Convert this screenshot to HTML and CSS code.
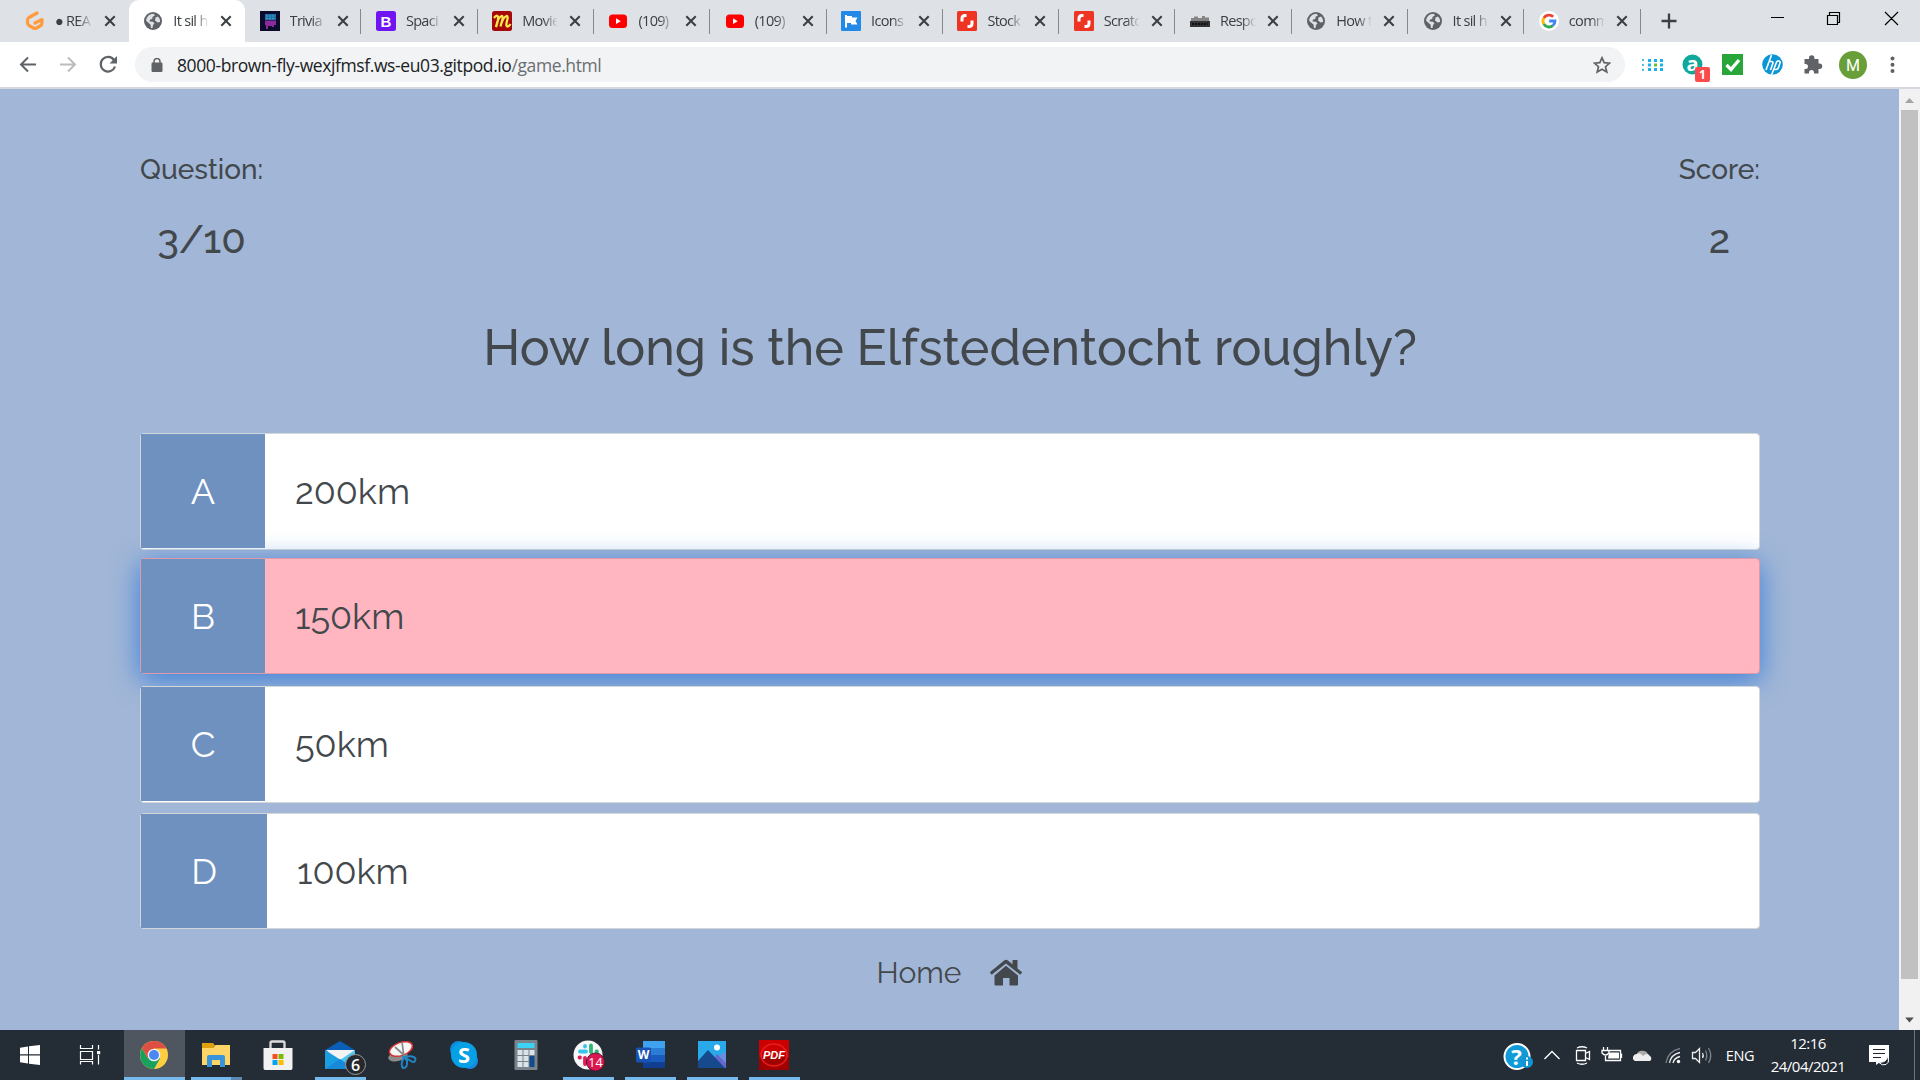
FILE: index.html
```html
<!DOCTYPE html>
<html lang="en">
<head>
<meta charset="utf-8">
<title>It sil heve</title>
<link rel="stylesheet" href="styles.css">
</head>
<body>
<svg class="defs" width="0" height="0">
  <symbol id="globe" viewBox="0 0 20 20"><circle cx="10" cy="10" r="9" fill="#5f6368"/><path d="M3 9.5C4 5 6.500 3 10.500 2.800L12 4.200 9.500 6 9.300 8 7 8.500 6.500 10.500 10 10.800 11.500 12.500 10 14 9.500 17 8 17 7.500 13.500 5 11.500zM12.500 6.500L15 5.500C16.800 7.500 17.300 9 17 11L14.500 11.500 12 9.500z" fill="#dee1e6"/></symbol>
  <symbol id="close" viewBox="0 0 12 12"><path d="M1.300 1.300L10.700 10.700M10.700 1.300L1.300 10.700" stroke="#3c4043" stroke-width="2.100"/></symbol>
  <symbol id="youtube" viewBox="0 0 20 20"><rect x="1" y="3.500" width="18" height="13.500" rx="3.500" fill="#f00"/><path d="M8 7.300L12.800 10.200 8 13z" fill="#fff"/></symbol>
  <symbol id="shutter" viewBox="0 0 20 20"><rect width="20" height="20" rx="1.500" fill="#ee3524"/><path d="M9.500 4.500H8C5.500 4.500 5 6 5 7.500V10.500M10.500 15.500H12C14.500 15.500 15 14 15 12.500V9.500" fill="none" stroke="#fff" stroke-width="3"/></symbol>
</svg>

<header class="tabstrip">
  <div class="tab first"><svg class="fav"><path d="M12 2L4 6.500Q2.500 7.500 2.500 9V12Q2.500 13.500 4 14.500L8.500 17Q10 17.800 11.500 17L15 15Q17 14 17 12V8.500L10 12" fill="none" stroke="#ff9b3d" stroke-width="3.200" stroke-linejoin="round" stroke-linecap="round"/></svg><span class="label">● REA</span><svg class="x"><use href="#close"/></svg></div>
  <div class="tab active"><svg class="fav"><use href="#globe"/></svg><span class="label">It sil h</span><svg class="x"><use href="#close"/></svg></div>
  <div class="tab"><svg class="fav"><rect width="20" height="20" fill="#0b0c2c"/><path d="M5 3H16V9H5z" fill="#236fa5"/><path d="M5 9.500H16V14H14V16H12V15H8V18H6V14H5z" fill="#8a2a9d"/><path d="M6 5H15M6 7.500H15" stroke="#2ea5d4" stroke-dasharray="2 1"/></svg><span class="label">Trivia</span><svg class="x"><use href="#close"/></svg></div>
  <div class="tab"><svg class="fav"><rect width="20" height="20" rx="2.500" fill="#7014f3"/><text x="10" y="15.500" class="b-letter">B</text></svg><span class="label">Spaci</span><svg class="x"><use href="#close"/></svg></div>
  <div class="tab"><svg class="fav"><rect width="20" height="20" rx="2.500" fill="#a50808"/><path d="M2 7Q5 3 6 6Q6.500 9 4 16Q6 6 9.500 5Q11.500 5 10 10L8.500 15.500Q11 6 14.500 5Q16.500 5 15 10Q13.500 15.500 15.500 15.500Q17 15.500 18.500 13" fill="none" stroke="#ffe94a" stroke-width="2.300"/></svg><span class="label">Movie</span><svg class="x"><use href="#close"/></svg></div>
  <div class="tab"><svg class="fav"><use href="#youtube"/></svg><span class="label">(109)</span><svg class="x"><use href="#close"/></svg></div>
  <div class="tab"><svg class="fav"><use href="#youtube"/></svg><span class="label">(109)</span><svg class="x"><use href="#close"/></svg></div>
  <div class="tab"><svg class="fav"><rect width="20" height="20" rx="1" fill="#228ae6"/><path d="M4 4H6V5H11V6.500H16.500L14.500 10 16.500 13.500H10V12H6V16.500H4z" fill="#fff"/></svg><span class="label">Icons</span><svg class="x"><use href="#close"/></svg></div>
  <div class="tab"><svg class="fav"><use href="#shutter"/></svg><span class="label">Stock</span><svg class="x"><use href="#close"/></svg></div>
  <div class="tab"><svg class="fav"><use href="#shutter"/></svg><span class="label">Scratc</span><svg class="x"><use href="#close"/></svg></div>
  <div class="tab"><svg class="fav"><path d="M1 7H4V5.500H8V7H12V5H15V6.500H19V10H1z" fill="#858585"/><rect y="10" width="20" height="6" fill="#333"/><path d="M2 13H18" stroke="#111" stroke-width="2" stroke-dasharray="2 1"/></svg><span class="label">Respo</span><svg class="x"><use href="#close"/></svg></div>
  <div class="tab"><svg class="fav"><use href="#globe"/></svg><span class="label">How t</span><svg class="x"><use href="#close"/></svg></div>
  <div class="tab"><svg class="fav"><use href="#globe"/></svg><span class="label">It sil h</span><svg class="x"><use href="#close"/></svg></div>
  <div class="tab"><svg class="fav"><circle cx="10" cy="10" r="10" fill="#fff"/><g fill="none" stroke-width="2.800"><path d="M14.200 5.800A6 6 0 0 0 4.800 7" stroke="#ea4335"/><path d="M4.800 7A6 6 0 0 0 4.800 13" stroke="#fbbc05"/><path d="M4.800 13A6 6 0 0 0 13.800 14.600" stroke="#34a853"/><path d="M13.800 14.600A6 6 0 0 0 16 10H10.200" stroke="#4285f4"/></g></svg><span class="label">comm</span><svg class="x"><use href="#close"/></svg></div>
  <svg class="newtab" viewBox="0 0 16 16"><path d="M8 .5V15.500M.5 8H15.500" stroke="#3c4043" stroke-width="2.300"/></svg>
  <svg class="winctl" viewBox="1760 0 160 42"><g fill="none" stroke="#000" stroke-width="1.200"><path d="M1771 17.500H1784M1827.500 15.500H1837.500V24.500H1827.500zM1829.500 15V12.500H1839.500V22.500H1838M1885 12L1898 25M1898 12L1885 25"/></g></svg>
</header>

<nav class="toolbar">
  <svg class="navs" viewBox="0 42 135 45"><g fill="none" stroke-width="2"><path d="M36 64.500H21M28 57.500L21 64.500 28 71.500" stroke="#5f6368"/><path d="M60 64.500H75M68 57.500L75 64.500 68 71.500" stroke="#babcbe"/><path d="M114 60A7.300 7.300 0 1 0 115 66.500" stroke="#5f6368" stroke-width="2.200"/></g><path d="M117 56V63.500H109.500z" fill="#5f6368"/></svg>
  <div class="address">
    <svg class="lock" viewBox="0 0 12 14"><rect x=".5" y="4.500" width="11" height="9.500" rx="1.200" fill="#5f6368"/><path d="M3 5V3.500A3 3 0 0 1 9 3.500V5" fill="none" stroke="#5f6368" stroke-width="1.500"/></svg>
    <span class="url">8000-brown-fly-wexjfmsf.ws-eu03.gitpod.io<span class="path">/game.html</span></span>
    <svg class="star" viewBox="0 0 18 18"><path d="M9 1.800L11.200 6.700 16.600 7.200 12.500 10.700 13.800 16 9 13.200 4.200 16 5.500 10.700 1.400 7.200 6.800 6.700z" fill="none" stroke="#5f6368" stroke-width="1.700"/></svg>
  </div>
  <svg class="exts" viewBox="1625 42 295 45">
    <g fill="#1ab0e8"><path d="M1642 59h2v2h-2zM1642 64h2v2h-2zM1642 69h2v2h-2z" opacity=".8"/><path d="M1648 59h3v3h-3zM1654 59h3v3h-3zM1660 59h3v3h-3zM1648 63.500h3v3h-3zM1660 63.500h3v3h-3zM1648 68h3v3h-3zM1654 68h3v3h-3zM1660 68h3v3h-3z"/></g><path d="M1654 63.500h3v3h-3z" fill="#6abf2c"/>
    <circle cx="1692.500" cy="64.500" r="10" fill="#0fa89b"/><text x="1692.500" y="71" class="ext-a">a</text><rect x="1695" y="67" width="15" height="15" rx="2" fill="#fd4a4a"/><text x="1702.500" y="79" class="ext-n">1</text>
    <rect x="1722" y="54" width="21" height="21" fill="#28a63a"/><path d="M1726.500 65L1731 69.500 1739 60" fill="none" stroke="#fff" stroke-width="3.300"/>
    <circle cx="1772.500" cy="64.500" r="10.300" fill="#0a96d6"/><path d="M1771.500 55L1766 70M1769.500 61.500H1771.500Q1773.500 61.500 1772.800 63.500L1770.500 70M1777 61L1771.500 75M1777 61H1779Q1780.500 61.500 1780 63L1778.500 67.500Q1778 69.500 1776 69.500H1774.500" fill="none" stroke="#fff" stroke-width="1.600"/>
    <path d="M1804.500 59H1809V58A2.700 2.700 0 0 1 1814.400 58V59H1818.500V63.500H1819.500A2.600 2.600 0 0 1 1819.500 69H1818.500V73.500H1814V72.500A2.400 2.400 0 0 0 1809 72.500V73.500H1804.500V69H1805.500A2.500 2.500 0 0 0 1805.500 64H1804.500z" fill="#5f6368"/>
    <circle cx="1853" cy="65" r="14" fill="#689f38"/><text x="1853" y="71" class="avatar">M</text>
    <g fill="#5f6368"><circle cx="1892.500" cy="58.500" r="2"/><circle cx="1892.500" cy="64.700" r="2"/><circle cx="1892.500" cy="71" r="2"/></g>
  </svg>
</nav>

<div class="viewport">
  <main class="page">
    <div class="hud">
      <div class="hud-item"><p class="hud-label">Question:</p><p class="hud-value">3/10</p></div>
      <div class="hud-item"><p class="hud-label">Score:</p><p class="hud-value">2</p></div>
    </div>
    <h1 class="question">How long is the Elfstedentocht roughly?</h1>
    <div class="choice"><p class="prefix">A</p><p class="text">200km</p></div>
    <div class="choice wrong"><p class="prefix">B</p><p class="text">150km</p></div>
    <div class="choice"><p class="prefix">C</p><p class="text">50km</p></div>
    <div class="choice last"><p class="prefix">D</p><p class="text">100km</p></div>
    <div class="home"><span>Home</span><svg class="house" viewBox="0 0 34 27"><path d="M17 6.800L29 16.500V25.500Q29 26.500 28 26.500H20.500V19H14V26.500H6.500Q5.500 26.500 5.500 25.500V16.500z"/><path d="M.8 13.300L15.500 1.300Q17 .3 18.500 1.300L23.500 5.300V1.500Q23.500 1 24 1H28Q28.500 1 28.500 1.500V9.500L33.200 13.300 31.300 15.800 17 4.400 2.700 15.800z"/></svg></div>
  </main>
  <aside class="scrollbar"><svg class="sarrow" viewBox="0 0 21 21"><path d="M6 14L10.500 9 15 14z" fill="#a3a3a3"/></svg><div class="thumb"></div><svg class="sarrow down" viewBox="0 0 21 21"><path d="M6 8L10.500 13 15 8z" fill="#505050"/></svg></aside>
</div>

<footer class="taskbar">
  <svg class="start" viewBox="0 0 123 50"><path d="M20 17.800L28 16.500V24.300H20zM29 16.300L40 15V24.300H29zM20 25.500H28V33.600L20 32.300zM29 25.500H40V35L29 33.700z" fill="#fff"/><g fill="none" stroke="#fff" stroke-width="1.200"><path d="M80.500 15V18.500H92.500V15M80.500 21.500H92.500V29.500H80.500zM80.500 34.500V31.500H92.500V34.500M98.500 15V19.500M98.500 25V34.500"/></g><rect x="97" y="21" width="3.200" height="3.200" fill="#fff"/></svg>
  <div class="app current"><svg viewBox="0 0 62 50"><circle cx="31" cy="25" r="14" fill="#ffcd41"/><path d="M18.900 18A14 14 0 0 0 31 39L37 28.500 31 25 25 28.500z" fill="#18a05e"/><path d="M18.900 18A14 14 0 0 1 43.500 18.500H31L25 28.500z" fill="#dd4f43"/><circle cx="31" cy="25" r="6.300" fill="#f1f1f1"/><circle cx="31" cy="25" r="5" fill="#4b87f3"/></svg></div>
  <div class="app multi"><svg viewBox="0 0 62 50"><path d="M17 13H28L30 15.500 28 18H17z" fill="#dfa20e"/><path d="M17 18H28L30.500 15H45V35H17z" fill="#fed667"/><path d="M22 37V27Q22 25 24 25H38Q40 25 40 27V37H35V30H27V37z" fill="#3a94dc"/></svg></div>
  <div class="app"><svg viewBox="0 0 62 50"><path d="M23.500 21V13Q23.500 11.500 25 11.500H36Q37.500 11.500 37.500 13V21" fill="none" stroke="#ddd" stroke-width="2.300"/><path d="M16.500 18H45.500V38Q45.500 40 44 40H18Q16.500 40 16.500 38z" fill="#f1f1f1"/><path d="M25.500 24h5v5h-5z" fill="#f25022"/><path d="M31.500 24h5v5h-5z" fill="#7fba00"/><path d="M25.500 30h5v5h-5z" fill="#00a4ef"/><path d="M31.500 30h5v5h-5z" fill="#ffb900"/></svg></div>
  <div class="app running"><svg viewBox="0 0 62 50"><path d="M16 20L31 11 46 20V30H16z" fill="#0a5eb5"/><path d="M17 20H45V30L31 34z" fill="#f3f3f3"/><path d="M16 20L46 39H16z" fill="#1b9de2"/><path d="M46 20L31 30 46 39z" fill="#45c6f5"/><path d="M16 39L31 29 46 39z" fill="#1689d8"/><circle cx="46.500" cy="34.500" r="10" fill="#25282c" stroke="#9a9a9a"/><text x="46.500" y="40.500" class="badge6">6</text></svg></div>
  <div class="app"><svg viewBox="0 0 62 50"><ellipse cx="27" cy="26" rx="10" ry="5" transform="rotate(-15 27 26)" fill="#8c8c8c"/><ellipse cx="30" cy="19" rx="12" ry="6.500" transform="rotate(-20 30 19)" fill="#f6f6f6" stroke="#d43333" stroke-width="1.500"/><path d="M24 17L36 28M31 12L33 27" stroke="#888" stroke-width="1.700"/><g fill="none" stroke="#2186c4" stroke-width="2"><path d="M33 27Q43 25 44.500 29 44 34 40 31zM33 27Q29 35 32 38 37 38 36 31z"/></g></svg></div>
  <div class="app"><svg viewBox="0 0 62 50"><circle cx="25.500" cy="19.500" r="8.500" fill="#0a8ddd"/><circle cx="37" cy="31" r="8" fill="#1689de"/><circle cx="31" cy="25" r="13" fill="#06a0e6"/><text x="31" y="33" class="skype">S</text></svg></div>
  <div class="app"><svg viewBox="0 0 62 50"><rect x="19.500" y="10" width="23" height="30" rx="1" fill="#78838b"/><rect x="22.500" y="13" width="17" height="5" fill="#3cd2f5"/><g fill="#dce3e8"><path d="M22.500 20h5v5h-5zM28.500 20h5v5h-5zM34.500 20h5v5h-5zM22.500 26h5v5h-5zM28.500 26h5v5h-5zM22.500 32h5v5h-5zM28.500 32h5v5h-5z"/></g><path d="M34.500 26h5v11h-5z" fill="#124a8d"/></svg></div>
  <div class="app running"><svg viewBox="0 0 62 50"><circle cx="31" cy="25" r="14.500" fill="#f7f7f7"/><g stroke-width="3.800" stroke-linecap="round"><path d="M28 16V16.500M23 21.500H29" stroke="#36c5f0"/><path d="M34 15.500V22M39.500 21.500H40" stroke="#2eb67d"/><path d="M28 28V34M22.500 27.500H23" stroke="#e01e5a"/><path d="M34 28H40" stroke="#ecb22e"/></g><circle cx="38.500" cy="32" r="9" fill="#dc1650" stroke="#50152c"/><text x="38.500" y="36.500" class="badge14">14</text></svg></div>
  <div class="app running"><svg viewBox="0 0 62 50"><path d="M24 11H46V18H24z" fill="#3fa2ee"/><path d="M24 18H46V25H24z" fill="#2b7cd4"/><path d="M24 25H46V32H24z" fill="#185abd"/><path d="M24 32H46V38H24z" fill="#103f91"/><rect x="17" y="17.500" width="15" height="15" rx="1.500" fill="#1852b3"/><text x="24.500" y="29" class="word">W</text></svg></div>
  <div class="app running"><svg viewBox="0 0 62 50"><rect x="17" y="11" width="28" height="27" fill="#2aa9ea"/><path d="M45 22V38H35L30 30z" fill="#6a8fde"/><path d="M33 29L36 24 45 33V38H35z" fill="#6668cd"/><path d="M17 31L27 20 44 38H17z" fill="#164a8c"/><circle cx="36" cy="17.500" r="3" fill="#fff"/></svg></div>
  <div class="app running"><svg viewBox="0 0 62 50"><rect x="16" y="10" width="30" height="30" fill="#cb0000"/><path d="M16 27H46V40H16z" fill="#8c0000" opacity=".7"/><ellipse cx="31" cy="25" rx="13" ry="11" fill="none" stroke="#ed1c1c" stroke-width="1.500"/><text x="31" y="29" class="pdf">PDF</text></svg></div>
  <svg class="tray" viewBox="1500 1030 224 50">
    <circle cx="1517" cy="1056.500" r="12.500" fill="#109bd8" stroke="#fff" stroke-width="2"/><text x="1516.500" y="1065" class="help">?</text><circle cx="1527" cy="1062" r="6" fill="#1095d2"/><path d="M1527 1061V1066M1527 1057.500V1059.500" stroke="#fff" stroke-width="2"/>
    <g fill="none" stroke="#fff" stroke-width="1.300"><path d="M1544.500 1059L1552 1051.500 1559.500 1059"/><path d="M1576.500 1050.500H1585.500V1060.500H1576.500zM1585.500 1053.500L1589.500 1051.500V1059.500L1585.500 1057.500M1577 1048Q1582 1045.500 1587 1048M1577 1063Q1582 1065.500 1587 1063"/><path d="M1608 1050.500H1620.500V1060.500H1605.500V1056M1621.500 1053.500V1058M1602 1050.500H1609V1053Q1605.500 1057 1602 1053zM1603.500 1047V1050M1607.500 1047V1050"/></g><path d="M1609 1052.500H1619V1058.500H1608z" fill="#fff"/>
    <path d="M1636 1056A6.500 6.500 0 0 1 1648 1054L1650 1060H1636z" fill="#aaa"/><path d="M1635 1061A3.700 3.700 0 0 1 1637 1054Q1640 1052 1643 1056Q1647 1052 1650 1056A3 3 0 0 1 1650 1061z" fill="#eee"/>
    <g fill="none" stroke-width="1.300"><path d="M1666 1063Q1668 1051 1680 1048.500" stroke="#78808a"/><path d="M1669.500 1063Q1671 1054.500 1680 1052.500M1673 1063Q1674 1058 1680 1056.500" stroke="#eee"/><path d="M1692.500 1052.500H1695.500L1699.500 1048.500V1062.500L1695.500 1058.500H1692.500zM1702.500 1053Q1704 1055.500 1702.500 1058" stroke="#eee"/><path d="M1705.500 1050.500Q1708 1055.500 1705.500 1060.500M1708.500 1048Q1713 1055.500 1708.500 1063" stroke="#7b838b"/></g><circle cx="1678.500" cy="1061.500" r="1.700" fill="#fff"/>
  </svg>
  <span class="lang">ENG</span>
  <div class="clock"><span>12:16</span><span>24/04/2021</span></div>
  <svg class="notes" viewBox="1860 1030 60 50"><path d="M1869 1045H1889V1062H1880L1876 1065V1062H1869z" fill="#fff"/><path d="M1873 1049.500H1885M1873 1053.500H1885M1873 1057.500H1881" stroke="#20262e" stroke-width="1.200"/><path d="M1886 1055Q1889 1062 1879 1062.500Q1882 1066 1886 1064.500Q1891 1061 1886 1055z" fill="#20262e" stroke="#fff"/><path d="M1914.500 1030V1080" stroke="#6d757c"/></svg>
</footer>
</body>
</html>
```
FILE: styles.css
```css
* { box-sizing: border-box; margin: 0; padding: 0; }
body {
  width: 1920px; height: 1080px; overflow: hidden;
  display: flex; flex-direction: column;
  font-family: "Open Sans", "Noto Sans", sans-serif;
}
.defs { position: absolute; }
svg { display: block; flex: none; }

/* Tab strip */
.tabstrip { height: 42px; background: #dee1e6; display: flex; align-items: center; padding-left: 12.500px; flex: none; }
.tab { width: 116.3px; height: 42px; flex: none; display: flex; align-items: center; padding-left: 14.500px; position: relative; }
.tab::after { content: ""; position: absolute; right: 0; top: 9px; width: 1px; height: 25px; background: #85888c; }
.tab.first::after, .tab.active::after { display: none; }
.tab.first { padding-left: 12.500px; }
.tab.active { background: #fff; border-radius: 10px 10px 0 0; padding-left: 14.500px; }
.fav { width: 20px; height: 20px; }
.label {
  width: 36px; margin-left: 10px; margin-right: 11px; overflow: hidden; white-space: nowrap;
  font-size: 14.500px; letter-spacing: -0.7px; color: #3c4043; line-height: 20px;
  -webkit-mask-image: linear-gradient(90deg, #000 60%, transparent); mask-image: linear-gradient(90deg, #000 60%, transparent);
}
.first .label { width: 38px; }
.x { width: 12px; height: 12px; }
.newtab { width: 16px; height: 16px; margin-left: 20px; }
.winctl { width: 160px; height: 42px; margin-left: auto; }

/* Toolbar */
.toolbar { height: 47px; flex: none; background: #fff; border-bottom: 2px solid #d5d8df; display: flex; align-items: flex-start; }
.navs { width: 135px; height: 45px; }
.address { width: 1490px; height: 35px; margin-top: 5px; border-radius: 18px; background: #f1f3f4; display: flex; align-items: center; padding: 0 14px 0 16px; flex: none; }
.lock { width: 12px; height: 14px; }
.url { margin-left: 14px; font-size: 17.500px; letter-spacing: -0.400px; color: #202124; white-space: nowrap; }
.path { color: #6a6e72; }
.star { width: 18px; height: 18px; margin-left: auto; }
.exts { width: 295px; height: 45px; }
.ext-a { font: bold 20px "Open Sans", sans-serif; fill: #fff; text-anchor: middle; }
.ext-n { font: bold 12px "Open Sans", sans-serif; fill: #fff; text-anchor: middle; }
.avatar { font: 16px Roboto, sans-serif; fill: #fff; text-anchor: middle; }
.b-letter { font: bold 15px "Liberation Sans", sans-serif; fill: #fff; text-anchor: middle; }

/* Quiz page */
.viewport { height: 941px; flex: none; display: flex; }
.page { width: 1899px; background: #a2b7d7; padding: 60px 139px 0 140px; font-family: Raleway, Lato, sans-serif; color: #43484c; }
.hud { display: flex; justify-content: space-between; }
.hud-item { text-align: center; }
.hud-label { font-size: 28px; font-weight: 500; line-height: 42px; height: 42px; }
.hud-value { font-size: 40px; line-height: 48px; margin-top: 24px; height: 48px; font-weight: 500; }
.question { font-size: 50px; font-weight: 500; line-height: 60px; margin-top: 55px; margin-bottom: 55px; text-align: center; white-space: nowrap; }
.choice { height: 117px; margin-bottom: 8px; background: #fff; border: 1px solid #d4d7da; border-radius: 4px; display: flex; font-size: 36px; line-height: 114px; }
.choice .prefix { width: 124px; height: 114px; background: #6f91bf; color: #fff; text-align: center; }
.choice .text { padding-left: 30px; }
.wrong { height: 116px; background: #ffb6c1; border-color: #dd9bab; margin-bottom: 12px; box-shadow: 0 6px 28px 0 rgba(40, 116, 216, 0.85); }
.wrong + .choice { margin-bottom: 10px; }
.last .prefix { width: 126px; }
.last { height: 116px; }
.home { display: flex; justify-content: center; align-items: center; gap: 28px; margin-top: 15px; height: 56px; font-size: 30px; }
.house { width: 34px; height: 27px; fill: #43484c; }
.scrollbar { width: 21px; background: #f1f1f1; display: flex; flex-direction: column; align-items: center; }
.sarrow { width: 21px; height: 21px; }
.thumb { width: 17px; height: 869px; background: #c1c1c1; }
.down { margin-top: 31px; height: 20px; }

/* Taskbar */
.taskbar { height: 50px; flex: none; background: #242c35; display: flex; align-items: stretch; color: #fff; }
.start { width: 123px; height: 50px; }
.app { width: 62px; height: 50px; flex: none; }
.app svg { width: 62px; height: 50px; }
.running { background: linear-gradient(#76b9ed, #76b9ed) 6px 47px / 51px 3px no-repeat; }
.current { background: linear-gradient(#76b9ed, #76b9ed) 1px 47px / 61px 3px no-repeat, linear-gradient(#50565f, #50565f) 1px 0 / 61px 47px no-repeat; }
.multi { background: linear-gradient(90deg, #76b9ed 40px, #5b8ab0 40px) 6px 47px / 51px 3px no-repeat; }
.badge6 { font: 600 16px "Open Sans", sans-serif; fill: #fff; text-anchor: middle; }
.badge14 { font: 12.500px "Open Sans", sans-serif; fill: #fff; text-anchor: middle; }
.skype { font: bold 22px "Open Sans", sans-serif; fill: #fff; text-anchor: middle; }
.word { font: bold 12px "Open Sans", sans-serif; fill: #fff; text-anchor: middle; }
.pdf { font: italic bold 11px "Liberation Sans", sans-serif; fill: #fff; text-anchor: middle; }
.help { font: bold 22px "Open Sans", sans-serif; fill: #fff; text-anchor: middle; }
.tray { width: 224px; height: 50px; margin-left: auto; }
.lang { width: 32px; text-align: center; font-size: 14.500px; line-height: 51px; letter-spacing: -0.4px; }
.clock { width: 104px; display: flex; flex-direction: column; text-align: center; padding-top: 2px; font-size: 15px; line-height: 23px; letter-spacing: -0.500px; }
.notes { width: 60px; height: 50px; }
```
